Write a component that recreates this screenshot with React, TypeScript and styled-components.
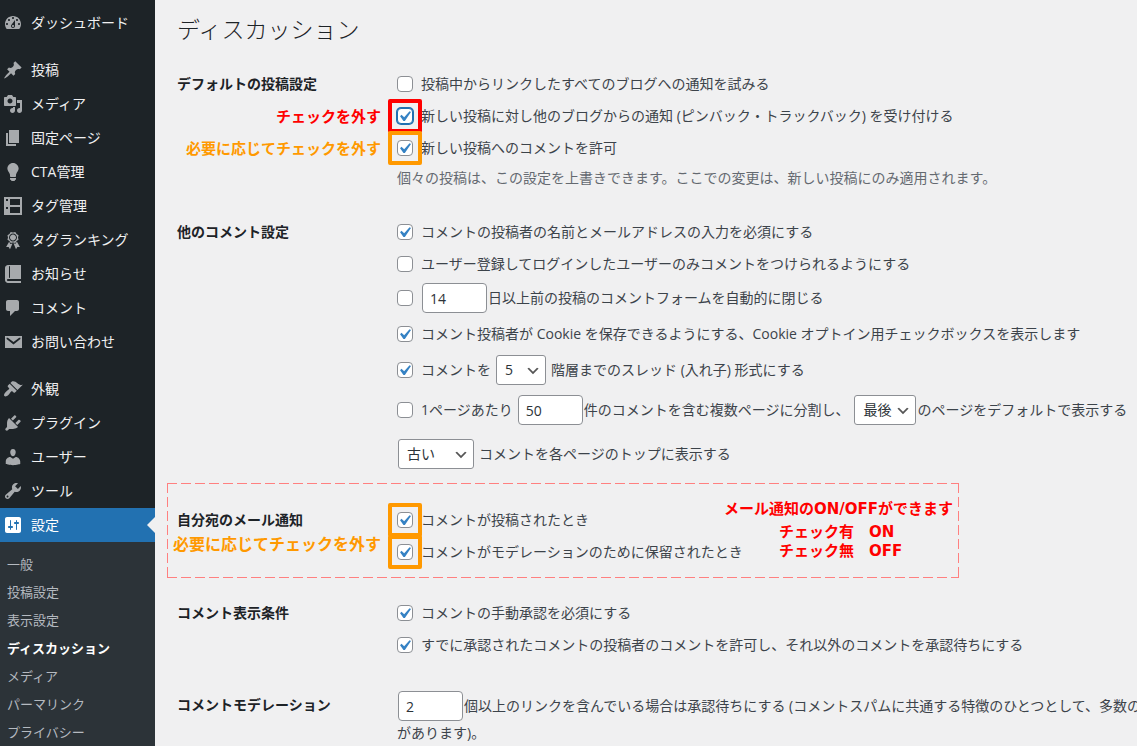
import React, { useId } from "react";
import styled, { createGlobalStyle } from "styled-components";

const colors = {
  page: "#f0f0f1",
  menu: "#1d2327",
  submenu: "#2c3338",
  accent: "#2271b1",
  text: "#3c434a",
  heading: "#1d2327",
  border: "#8c8f94",
  red: "#ff0000",
  orange: "#ff9900",
};

const GlobalStyle = createGlobalStyle`
  *, *::before, *::after { box-sizing: border-box; }
  body {
    margin: 0;
    background: ${colors.page};
    color: ${colors.text};
    font-family: "Open Sans", "Noto Sans CJK JP", sans-serif;
    font-size: 14px;
    line-height: 20px;
  }
`;

const Layout = styled.div`
  display: flex;
  min-height: 100vh;
  overflow: hidden;
`;

/* ---------- Admin menu ---------- */

const Sidebar = styled.nav`
  flex: 0 0 155px;
  padding-top: 6px;
  background: ${colors.menu};
`;

const MenuList = styled.ul`
  margin: 0;
  padding: 0;
  list-style: none;
`;

const MenuItem = styled.li<{ $separated?: boolean }>`
  margin-top: ${(p) => (p.$separated ? "13px" : "0")};
`;

const MenuLink = styled.a<{ $active?: boolean }>`
  position: relative;
  display: flex;
  align-items: center;
  gap: 8px;
  height: 34px;
  padding-left: 3px;
  background: ${(p) => (p.$active ? colors.accent : "transparent")};
  color: ${(p) => (p.$active ? "#fff" : "#f0f0f1")};
  text-decoration: none;
  white-space: nowrap;

  svg {
    flex: none;
    fill: ${(p) => (p.$active ? "#fff" : "#a7aaad")};
  }

  &::after {
    content: "";
    display: ${(p) => (p.$active ? "block" : "none")};
    position: absolute;
    right: 0;
    top: 9px;
    border: 8px solid transparent;
    border-left-width: 0;
    border-right-color: ${colors.page};
  }
`;

const Submenu = styled.ul`
  margin: 0;
  padding: 8px 0;
  list-style: none;
  background: ${colors.submenu};
`;

const SubmenuLink = styled.a<{ $current?: boolean }>`
  display: block;
  padding: 4px 7px;
  font-size: 13px;
  font-weight: ${(p) => (p.$current ? 600 : 400)};
  color: ${(p) => (p.$current ? "#fff" : "#b5bac0")};
  text-decoration: none;
`;

const icons: Record<string, string> = {
  dashboard:
    "M3.76 16h12.48c1.1-1.37 1.76-3.11 1.76-5 0-4.42-3.58-8-8-8s-8 3.58-8 8c0 1.89.66 3.63 1.76 5zM10 4c.55 0 1 .45 1 1s-.45 1-1 1-1-.45-1-1 .45-1 1-1zM6 6c.55 0 1 .45 1 1s-.45 1-1 1-1-.45-1-1 .45-1 1-1zm8 0c.55 0 1 .45 1 1s-.45 1-1 1-1-.45-1-1 .45-1 1-1zm-5.37 5.55L12 7v6c0 1.1-.9 2-2 2s-2-.9-2-2c0-.57.24-1.08.63-1.45zM4 10c.55 0 1 .45 1 1s-.45 1-1 1-1-.45-1-1 .45-1 1-1zm12 0c.55 0 1 .45 1 1s-.45 1-1 1-1-.45-1-1 .45-1 1-1zm-5 3c0-.55-.45-1-1-1s-1 .45-1 1 .45 1 1 1 1-.45 1-1z",
  post: "M10.44 3.02l1.82-1.82 6.36 6.35-1.83 1.82c-1.05-.68-2.48-.57-3.41.36l-.75.75c-.92.93-1.04 2.35-.35 3.41l-1.83 1.82-2.41-2.41-2.8 2.79c-.42.42-3.38 2.71-3.8 2.29s1.86-3.39 2.28-3.81l2.79-2.79L4.1 9.36l1.83-1.82c1.05.69 2.48.57 3.4-.36l.75-.75c.93-.92 1.05-2.35.36-3.41z",
  media:
    "M13 11V4c0-.55-.45-1-1-1h-1.67L9 1H5L3.67 3H2c-.55 0-1 .45-1 1v7c0 .55.45 1 1 1h10c.55 0 1-.45 1-1zM7 4.5c1.38 0 2.5 1.12 2.5 2.5S8.38 9.5 7 9.5 4.5 8.38 4.5 7 5.62 4.5 7 4.5zM14 6h5v10.5c0 1.38-1.12 2.5-2.5 2.5S14 17.88 14 16.5s1.12-2.5 2.5-2.5c.17 0 .34.02.5.05V9h-3V6zm-4 8.05V13h2v3.5c0 1.38-1.12 2.5-2.5 2.5S7 17.88 7 16.5 8.12 14 9.5 14c.17 0 .34.02.5.05z",
  page: "M6 15V2h10v13H6zm-1 1h8v2H3V5h2v11z",
  bulb: "M10 1c3.11 0 5.63 2.52 5.63 5.62 0 1.84-2.03 4.58-2.03 4.58-.33.44-.6 1.25-.6 1.8v1c0 .55-.45 1-1 1H8c-.55 0-1-.45-1-1v-1c0-.55-.27-1.36-.6-1.8 0 0-2.02-2.74-2.02-4.58C4.38 3.52 6.89 1 10 1zM7 16.87V16h6v.87c0 .62-.13 1.13-.75 1.13H12c0 .62-.4 1-1.02 1h-2c-.61 0-.98-.38-.98-1h-.25c-.62 0-.75-.51-.75-1.13z",
  index:
    "M1 1h18v18H1zM3 3v2h2V3zM7 3v6h10V3zM7 11v6h10v-6zM3 11v2h2v-2z",
  award:
    "M4.46 5.16L5 7.46l-.54 2.29 2.01 1.24L7.7 13l2.3-.54 2.3.54 1.23-2.01 2.01-1.24L15 7.46l.54-2.3-2-1.24-1.24-2.01-2.3.55-2.29-.54-1.25 2zm5.55 6.34c-2.21 0-4-1.8-4-4 0-2.21 1.79-4 4-4s4 1.79 4 4c0 2.2-1.79 4-4 4zm-.02-1C8.33 10.5 7 9.16 7 7.5c0-1.65 1.33-3 2.99-3S13 5.85 13 7.5c0 1.66-1.35 3-3.01 3zm3.84 1.1l-1.28 2.24-2.08-.47L13 19.2l1.4-2.2h2.5zm-7.7.07l1.25 2.25 2.13-.51L7 19.2 5.6 17H3.1z",
  book: "M5 17h13v2H5c-1.66 0-3-1.34-3-3V4c0-1.66 1.34-3 3-3h13v14H5c-.55 0-1 .45-1 1s.45 1 1 1zm2-3.5v-11c0-.28-.22-.5-.5-.5s-.5.22-.5.5v11c0 .28.22.5.5.5s.5-.22.5-.5z",
  comment:
    "M5 2h9c1.1 0 2 .9 2 2v7c0 1.1-.9 2-2 2h-2l-5 5v-5H5c-1.1 0-2-.9-2-2V4c0-1.1.9-2 2-2z",
  mail: "M2 4h17v12H2zM3.6 5.8L3.6 7.1L10.5 12.6L17.4 7.1L17.4 5.8L16.2 5.8L10.5 10L4.8 5.8z",
  appearance:
    "M14.48 11.06L7.41 3.99l1.5-1.5c.5-.56 2.3-.47 3.51.32 1.21.8 1.43 1.28 2.91 2.1 1.18.64 2.45 1.26 4.45.85zm-.71.71L6.7 4.7 4.93 6.47c-.39.39-.39 1.02 0 1.41l1.06 1.06c.39.39.39 1.03 0 1.42-.6.6-1.43 1.11-2.21 1.69-.35.26-.7.53-1.01.84C1.43 14.23.4 16.08 1.4 17.07c.99 1 2.84-.03 4.18-1.36.31-.31.58-.66.85-1.02.57-.78 1.08-1.61 1.69-2.21.39-.39 1.02-.39 1.41 0l1.06 1.06c.39.39 1.02.39 1.41 0z",
  plugin:
    "M13.11 4.36L9.87 7.6 8 5.73l3.24-3.24c.35-.34 1.05-.2 1.56.32.52.51.66 1.21.31 1.55zm-8 1.77l.91-1.12 9.01 9.01-1.19.84c-.71.71-2.63 1.16-3.82 1.16H6.14L4.9 17.26c-.59.59-1.54.59-2.12 0-.59-.58-.59-1.53 0-2.12l1.24-1.24v-3.88c0-1.13.4-3.19 1.09-3.89zm7.26 3.97l3.24-3.24c.34-.35 1.04-.21 1.55.31.52.51.66 1.21.31 1.55l-3.24 3.25z",
  user: "M10 9.25c-2.27 0-2.73-3.44-2.73-3.44C7 4.02 7.82 2 9.97 2c2.16 0 2.98 2.02 2.71 3.81 0 0-.41 3.44-2.68 3.44zm0 2.57L12.72 10c2.39 0 4.52 2.33 4.52 4.53v2.49s-3.65 1.13-7.24 1.13c-3.65 0-7.24-1.13-7.24-1.13v-2.49c0-2.25 1.94-4.48 4.47-4.48z",
  tool: "M16.68 9.77c-1.34 1.34-3.3 1.67-4.95.99l-5.41 6.52c-.99.99-2.59.99-3.58 0s-.99-2.59 0-3.57l6.52-5.42c-.68-1.65-.35-3.61.99-4.95 1.28-1.28 3.12-1.62 4.72-1.06l-2.89 2.89 2.82 2.82 2.86-2.87c.53 1.58.18 3.39-1.08 4.65zM3.81 16.21c.4.39 1.04.39 1.43 0 .4-.4.4-1.04 0-1.43-.39-.4-1.03-.4-1.43 0-.39.39-.39 1.03 0 1.43z",
  settings:
    "M18 16V4c0-1.1-.9-2-2-2H4c-1.1 0-2 .9-2 2v12c0 1.1.9 2 2 2h12c1.1 0 2-.9 2-2zM8 11h1c.55 0 1 .45 1 1s-.45 1-1 1H8v1.5c0 .28-.22.5-.5.5s-.5-.22-.5-.5V13H6c-.55 0-1-.45-1-1s.45-1 1-1h1V5.5c0-.28.22-.5.5-.5s.5.22.5.5V11zm5-2h-1c-.55 0-1-.45-1-1s.45-1 1-1h1V5.5c0-.28.22-.5.5-.5s.5.22.5.5V7h1c.55 0 1 .45 1 1s-.45 1-1 1h-1v5.5c0 .28-.22.5-.5.5s-.5-.22-.5-.5V9z",
};

type Entry = { icon: string; label: string; separated?: boolean; active?: boolean };

const menu: Entry[] = [
  { icon: "dashboard", label: "ダッシュボード" },
  { icon: "post", label: "投稿", separated: true },
  { icon: "media", label: "メディア" },
  { icon: "page", label: "固定ページ" },
  { icon: "bulb", label: "CTA管理" },
  { icon: "index", label: "タグ管理" },
  { icon: "award", label: "タグランキング" },
  { icon: "book", label: "お知らせ" },
  { icon: "comment", label: "コメント" },
  { icon: "mail", label: "お問い合わせ" },
  { icon: "appearance", label: "外観", separated: true },
  { icon: "plugin", label: "プラグイン" },
  { icon: "user", label: "ユーザー" },
  { icon: "tool", label: "ツール" },
  { icon: "settings", label: "設定", active: true },
];

const submenu = [
  "一般",
  "投稿設定",
  "表示設定",
  "ディスカッション",
  "メディア",
  "パーマリンク",
  "プライバシー",
];

const MenuIcon = ({ name }: { name: string }) => (
  <svg width="20" height="20" viewBox="0 0 20 20" aria-hidden="true">
    <path fillRule={name === "user" || name === "appearance" ? "nonzero" : "evenodd"} d={icons[name]} />
  </svg>
);

/* ---------- Settings form ---------- */

const Main = styled.main`
  flex: 1;
  min-width: 0;
  padding: 13px 0 0 22px;
`;

const PageTitle = styled.h1`
  margin: 0 0 23px;
  font-size: 23px;
  line-height: 32px;
  font-weight: 300;
  color: ${colors.heading};
`;

const Section = styled.section`
  display: grid;
  grid-template-columns: 220px minmax(0, 1fr);
  margin-bottom: 28px;
`;

const dash = (dir: string) =>
  `repeating-linear-gradient(${dir}, #ff8080 0 10px, transparent 10px 14px)`;

const DashedFrame = styled.div`
  position: relative;
  max-width: 792px;
  margin: -21px 0 19px -10px;
  padding: 21px 10px 10px;
  background-image: ${dash("to right")}, ${dash("to right")}, ${dash("to bottom")}, ${dash("to bottom")};
  background-size: 100% 1px, 100% 1px, 1px 100%, 1px 100%;
  background-position: 0 0, 0 100%, 0 0, 100% 0;
  background-repeat: no-repeat;

  ${Section} {
    margin-bottom: 0;
  }
`;

const SectionTitle = styled.h2`
  margin: 0;
  font-size: 14px;
  line-height: 32px;
  font-weight: 600;
  color: ${colors.heading};
`;

const Fields = styled.div`
  position: relative;
  white-space: nowrap;
`;

const Line = styled.div<{ $height?: number }>`
  position: relative;
  display: flex;
  align-items: center;
  height: ${(p) => p.$height ?? 32}px;
`;

const Description = styled.p`
  margin: 0;
  padding-top: 4px;
  color: #646970;
`;

const Continuation = styled.p`
  margin: 0;
`;

const CheckBox = styled.span`
  position: relative;
  display: flex;
  flex: none;
  width: 16px;
  height: 16px;
  margin-right: 8px;

  svg {
    display: none;
    position: absolute;
    left: -3px;
    top: -2px;
    fill: #3582c4;
    pointer-events: none;
  }

  input:checked + svg {
    display: block;
  }
`;

const CheckInput = styled.input<{ $focused?: boolean }>`
  appearance: none;
  width: 16px;
  height: 16px;
  margin: 0;
  border: 1px solid ${(p) => (p.$focused ? colors.accent : colors.border)};
  border-radius: 4px;
  background: #fff;
  box-shadow: ${(p) => (p.$focused ? `0 0 0 1px ${colors.accent}` : "none")};
`;

const Marker = styled.span<{ $color: string }>`
  position: absolute;
  left: -9px;
  top: -9px;
  width: 34px;
  height: 34px;
  border: 4px solid ${(p) => p.$color};
  border-radius: 2px;
  pointer-events: none;
`;

const NumberInput = styled.input`
  width: 65px;
  height: 30px;
  margin: 0 1px;
  padding: 0 7px;
  border: 1px solid ${colors.border};
  border-radius: 4px;
  background: #fff;
  color: #2c3338;
  font: inherit;
`;

const SelectBox = styled.span<{ $width: number; $gap: number }>`
  position: relative;
  flex: none;
  width: ${(p) => p.$width}px;
  height: 30px;
  margin: 0 ${(p) => p.$gap}px 0 1px;

  svg {
    position: absolute;
    right: 5px;
    top: 8px;
    fill: #555;
    pointer-events: none;
  }
`;

const Select = styled.select`
  appearance: none;
  width: 100%;
  height: 30px;
  margin: 0;
  padding: 0 0 0 8px;
  border: 1px solid ${colors.border};
  border-radius: 3px;
  background: #fff;
  color: #2c3338;
  font: inherit;
`;

const Spaced = styled.label`
  margin-right: 4px;
`;

/* ---------- Annotations ---------- */

const Note = styled.span<{ $color: string }>`
  position: absolute;
  right: 100%;
  top: 50%;
  transform: translateY(-50%);
  margin-right: 16px;
  font-size: 15px;
  font-weight: 700;
  color: ${(p) => p.$color};
  white-space: nowrap;
`;

const GroupNote = styled(Note)`
  top: 40px;
  font-size: 16px;
`;

const Callout = styled.div`
  position: absolute;
  top: 17px;
  right: 6px;
  font-family: "DejaVu Sans", "Noto Sans CJK JP", sans-serif;
  font-size: 15px;
  line-height: 19px;
  font-weight: 700;
  color: ${colors.red};
  white-space: pre;
`;

const CalloutList = styled.div`
  padding: 4px 0 0 55px;

  div {
    height: 19px;
  }
`;

type CheckProps = {
  id: string;
  checked?: boolean;
  focused?: boolean;
  marker?: string;
  label?: string;
};

const Check = ({ id, checked, focused, marker, label }: CheckProps) => (
  <CheckBox>
    <CheckInput id={id} type="checkbox" defaultChecked={checked} $focused={focused} aria-label={label} />
    <svg width="21" height="21" viewBox="0 0 20 20" aria-hidden="true">
      <path d="M14.83 4.89l1.34.94-5.81 8.38H9.02L5.78 9.67l1.34-1.25 2.57 2.4z" />
    </svg>
    {marker && <Marker $color={marker} />}
  </CheckBox>
);

type OptionProps = {
  text: string;
  checked?: boolean;
  focused?: boolean;
  marker?: string;
  note?: string;
};

const Option = ({ text, note, marker, ...rest }: OptionProps) => {
  const id = useId();
  return (
    <Line>
      {note && marker && <Note $color={marker}>{note}</Note>}
      <Check id={id} marker={marker} {...rest} />
      <label htmlFor={id}>{text}</label>
    </Line>
  );
};

type DropdownProps = { id: string; value: string; width: number; gap: number; label?: string };

const Dropdown = ({ id, value, width, gap, label }: DropdownProps) => (
  <SelectBox $width={width} $gap={gap}>
    <Select id={id} defaultValue={value} aria-label={label}>
      <option value={value}>{value}</option>
    </Select>
    <svg width="16" height="16" viewBox="0 0 20 20" aria-hidden="true">
      <path d="M5 6l5 5 5-5 2 1-7 7-7-7 2-1z" />
    </svg>
  </SelectBox>
);

export default function App() {
  return (
    <>
      <GlobalStyle />
      <Layout>
        <Sidebar>
          <MenuList>
            {menu.map((item) => (
              <MenuItem key={item.label} $separated={item.separated}>
                <MenuLink href="#" $active={item.active}>
                  <MenuIcon name={item.icon} />
                  {item.label}
                </MenuLink>
              </MenuItem>
            ))}
          </MenuList>
          <Submenu>
            {submenu.map((label) => (
              <li key={label}>
                <SubmenuLink href="#" $current={label === "ディスカッション"}>
                  {label}
                </SubmenuLink>
              </li>
            ))}
          </Submenu>
        </Sidebar>

        <Main>
          <PageTitle>ディスカッション</PageTitle>

          <Section>
            <SectionTitle>デフォルトの投稿設定</SectionTitle>
            <Fields>
              <Option text="投稿中からリンクしたすべてのブログへの通知を試みる" />
              <Option
                checked
                focused
                marker={colors.red}
                note="チェックを外す"
                text="新しい投稿に対し他のブログからの通知 (ピンバック・トラックバック) を受け付ける"
              />
              <Option
                checked
                marker={colors.orange}
                note="必要に応じてチェックを外す"
                text="新しい投稿へのコメントを許可"
              />
              <Description>
                個々の投稿は、この設定を上書きできます。ここでの変更は、新しい投稿にのみ適用されます。
              </Description>
            </Fields>
          </Section>

          <Section>
            <SectionTitle>他のコメント設定</SectionTitle>
            <Fields>
              <Option checked text="コメントの投稿者の名前とメールアドレスの入力を必須にする" />
              <Option text="ユーザー登録してログインしたユーザーのみコメントをつけられるようにする" />
              <Line $height={36}>
                <Check id="close-comments" label="コメントフォームを自動的に閉じる" />
                <NumberInput id="close-days" defaultValue="14" />
                <label htmlFor="close-days">日以上前の投稿のコメントフォームを自動的に閉じる</label>
              </Line>
              <Line $height={36}>
                <Check id="cookies" checked />
                <label htmlFor="cookies">
                  コメント投稿者が Cookie を保存できるようにする、Cookie オプトイン用チェックボックスを表示します
                </label>
              </Line>
              <Line $height={36}>
                <Check id="threads" checked />
                <Spaced htmlFor="threads">コメントを</Spaced>
                <Dropdown id="depth" value="5" width={50} gap={5} />
                <label htmlFor="depth">階層までのスレッド (入れ子) 形式にする</label>
              </Line>
              <Line $height={44}>
                <Check id="paging" />
                <Spaced htmlFor="paging">1ページあたり</Spaced>
                <NumberInput id="per-page" defaultValue="50" />
                <Spaced htmlFor="per-page">件のコメントを含む複数ページに分割し、</Spaced>
                <Dropdown id="default-page" value="最後" width={62} gap={1} />
                <label htmlFor="default-page">のページをデフォルトで表示する</label>
              </Line>
              <Line $height={44}>
                <Dropdown id="order" value="古い" width={76} gap={5} />
                <label htmlFor="order">コメントを各ページのトップに表示する</label>
              </Line>
            </Fields>
          </Section>

          <DashedFrame>
            <Section>
              <SectionTitle>自分宛のメール通知</SectionTitle>
              <Fields>
                <GroupNote $color={colors.orange}>必要に応じてチェックを外す</GroupNote>
                <Option checked marker={colors.orange} text="コメントが投稿されたとき" />
                <Option
                  checked
                  marker={colors.orange}
                  text="コメントがモデレーションのために保留されたとき"
                />
              </Fields>
            </Section>
            <Callout>
              メール通知のON/OFFができます
              <CalloutList>
                <div>チェック有　ON</div>
                <div>チェック無　OFF</div>
              </CalloutList>
            </Callout>
          </DashedFrame>

          <Section>
            <SectionTitle>コメント表示条件</SectionTitle>
            <Fields>
              <Option checked text="コメントの手動承認を必須にする" />
              <Option
                checked
                text="すでに承認されたコメントの投稿者のコメントを許可し、それ以外のコメントを承認待ちにする"
              />
            </Fields>
          </Section>

          <Section>
            <SectionTitle>コメントモデレーション</SectionTitle>
            <Fields>
              <Line $height={34}>
                <NumberInput id="max-links" defaultValue="2" />
                <label htmlFor="max-links">
                  個以上のリンクを含んでいる場合は承認待ちにする (コメントスパムに共通する特徴のひとつとして、多数の
                </label>
              </Line>
              <Continuation>があります)。</Continuation>
            </Fields>
          </Section>
        </Main>
      </Layout>
    </>
  );
}
